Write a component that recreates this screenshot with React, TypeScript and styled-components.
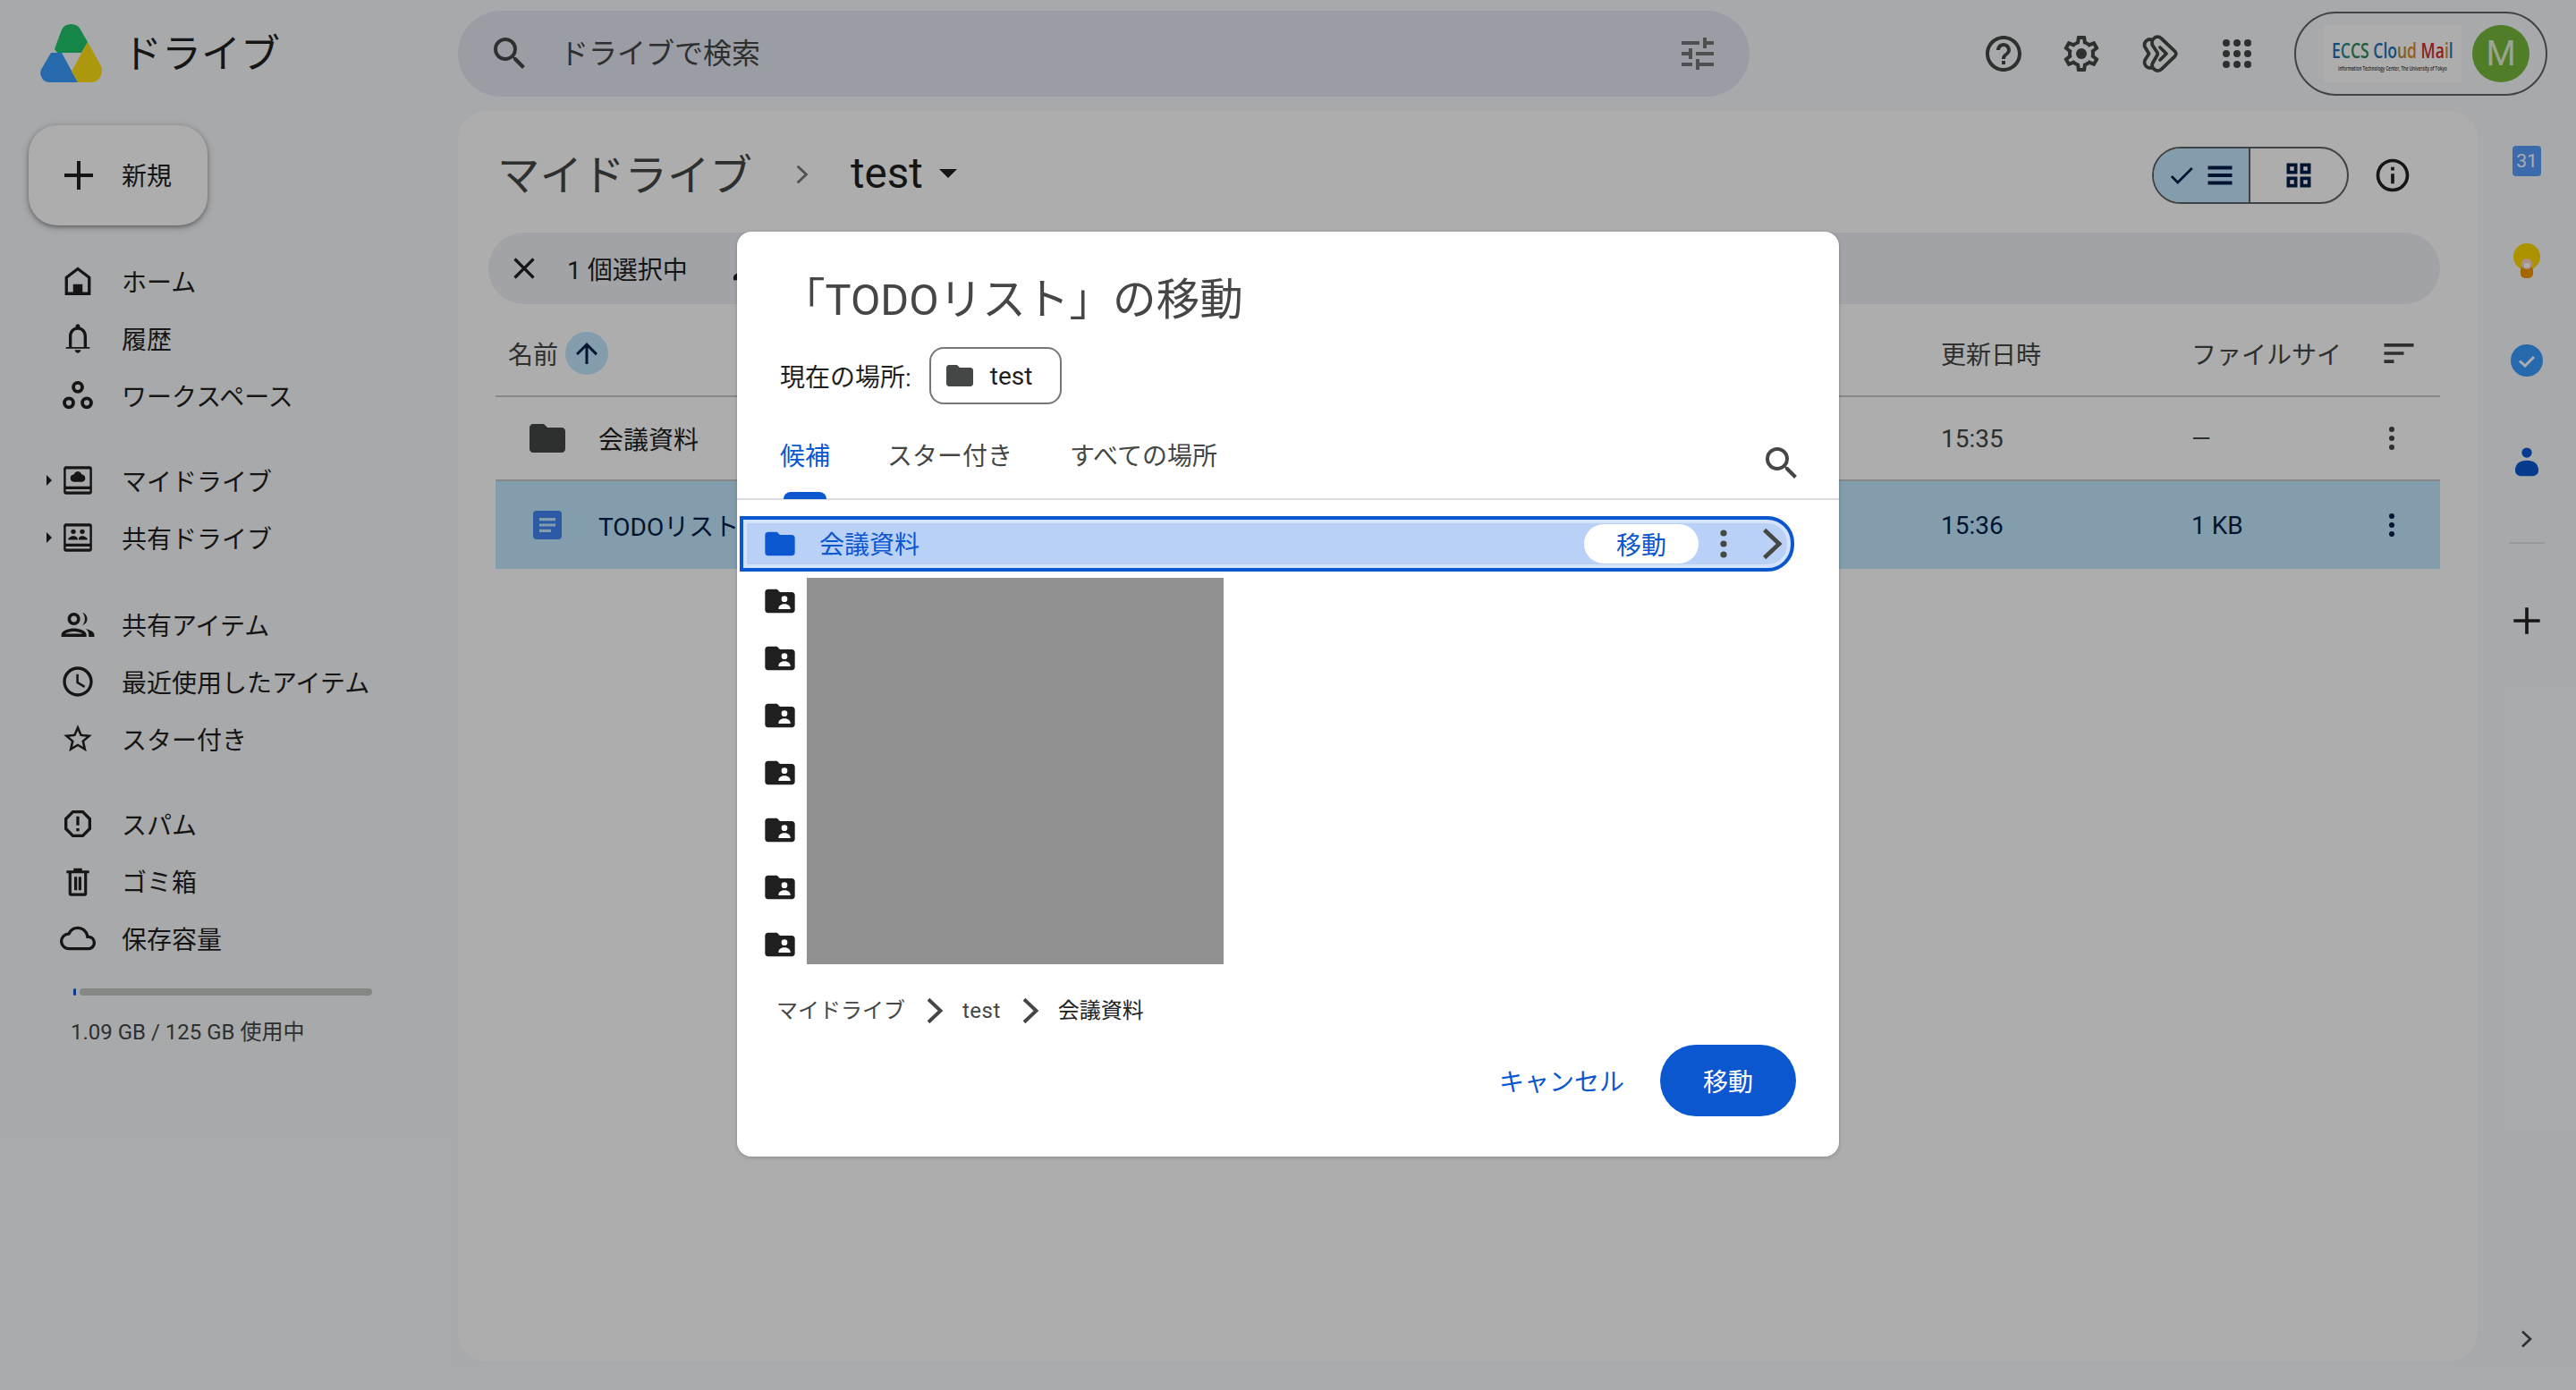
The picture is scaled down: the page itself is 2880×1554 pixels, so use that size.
import styled, { createGlobalStyle } from "styled-components";

const GlobalStyle = createGlobalStyle`
  html, body {
    margin: 0;
    padding: 0;
    height: 100%;
  }
  body {
    background: #f8fafd;
    font-family: Roboto, "Noto Sans CJK JP", sans-serif;
    color: #1f1f1f;
    overflow: hidden;
  }
  * {
    box-sizing: border-box;
  }
`;

const Shell = styled.div`
  position: relative;
  width: 2880px;
  height: 1554px;
  display: grid;
  grid-template-columns: 512px 2258px 110px;
  grid-template-rows: 124px 1398px;
`;

/* ---------- top bar ---------- */

const Brand = styled.div`
  display: flex;
  align-items: center;
  padding: 0 0 10px 45px;
  gap: 23px;
  font-size: 44px;
  color: #1f1f1f;
`;

const LogoWrap = styled.span`
  display: flex;
  margin-top: 5px;
`;

const TopBar = styled.div`
  grid-column: 2 / 4;
  display: flex;
  align-items: center;
  padding: 0 32px 4px 0;
`;

const SearchBox = styled.div`
  width: 1444px;
  height: 96px;
  border-radius: 48px;
  background: #e4e8f2;
  display: flex;
  align-items: center;
  padding: 0 34px;
  gap: 32px;
  font-size: 32px;
  color: #444746;
`;

const SearchLabel = styled.span`
  flex: 1;
  padding-bottom: 6px;
`;

const TuneWrap = styled.span`
  display: flex;
  color: #747775;
`;

const TopIcons = styled.div`
  display: flex;
  align-items: center;
  margin-left: 260px;
  gap: 39px;
  color: #444746;
`;

const AccountPill = styled.div`
  margin-left: auto;
  width: 283px;
  height: 94px;
  border: 2px solid #5f6368;
  border-radius: 47px;
  display: flex;
  align-items: center;
  justify-content: flex-end;
  padding-right: 18px;
  gap: 12px;
`;

const MailBox = styled.div`
  width: 154px;
  height: 64px;
  background: #fff;
  display: flex;
  align-items: center;
  justify-content: center;
`;

const MailLogo = styled.div`
  display: flex;
  flex-direction: column;
  align-items: center;
  font-family: "Open Sans", sans-serif;
  font-weight: 600;
  font-size: 24px;
  line-height: 33px;
  white-space: nowrap;
  transform: scaleX(0.73);
`;

const MailLetter = styled.span<{ $c: string }>`
  color: ${({ $c }) => $c};
`;

const MailSub = styled.div`
  font-size: 6.2px;
  line-height: 9px;
  font-weight: 600;
  color: #333;
`;

const Avatar = styled.div`
  width: 64px;
  height: 64px;
  border-radius: 50%;
  background: #75b83b;
  color: #e8f0d8;
  font-size: 38px;
  display: flex;
  align-items: center;
  justify-content: center;
`;

/* ---------- sidebar ---------- */

const Sidebar = styled.nav`
  display: flex;
  flex-direction: column;
  padding-top: 16px;
`;

const NewButton = styled.div`
  width: 200px;
  height: 112px;
  margin-left: 32px;
  border-radius: 32px;
  background: #fff;
  box-shadow: 0 2px 4px rgba(0, 0, 0, 0.3), 0 2px 8px 2px rgba(0, 0, 0, 0.15);
  display: flex;
  align-items: center;
  padding-left: 32px;
  gap: 24px;
  font-size: 28px;
  color: #1f1f1f;
`;

const NewLabel = styled.span`
  padding-bottom: 3px;
`;

const NavGroup = styled.div<{ $top: number }>`
  display: flex;
  flex-direction: column;
  margin-top: ${({ $top }) => $top}px;
`;

const NavRow = styled.div`
  height: 64px;
  display: flex;
  align-items: center;
  position: relative;
  padding-left: 62px;
  gap: 24px;
  font-size: 28px;
  color: #1f1f1f;
`;

const NavIcon = styled.span`
  width: 50px;
  height: 50px;
  display: flex;
  align-items: center;
  justify-content: center;
  color: #1f1f1f;
`;

const Caret = styled.span`
  position: absolute;
  left: 52px;
  top: 26px;
  width: 0;
  height: 0;
  border-left: 6px solid #1f1f1f;
  border-top: 6px solid transparent;
  border-bottom: 6px solid transparent;
`;

const StorageTrack = styled.div`
  width: 334px;
  height: 8px;
  margin: 24px 0 0 82px;
  display: flex;
  gap: 4px;
`;

const StorageUsed = styled.div`
  width: 3px;
  background: #0b57d0;
  border-radius: 2px;
`;

const StorageRest = styled.div`
  flex: 1;
  background: #c4c7c5;
  border-radius: 4px;
`;

const StorageText = styled.div`
  margin: 21px 0 0 79px;
  font-size: 24px;
  color: #444746;
`;

/* ---------- main panel ---------- */

const MainPanel = styled.main`
  background: #fff;
  border-radius: 32px;
  display: flex;
  flex-direction: column;
  padding: 0 42px;
`;

const TitleRow = styled.div`
  height: 136px;
  flex-shrink: 0;
  display: flex;
  align-items: center;
  padding: 8px 0 0 2px;
`;

const Crumbs = styled.div`
  display: flex;
  align-items: center;
  padding-bottom: 8px;
`;

const CrumbRoot = styled.span`
  font-size: 47.5px;
  color: #444746;
`;

const CrumbArrow = styled.span`
  margin: 6px 42px 0 42px;
  display: flex;
  color: #747775;
`;

const CrumbCurrent = styled.span`
  font-size: 47.5px;
  color: #1f1f1f;
  padding-top: 3px;
`;

const CrumbCaret = styled.span`
  width: 0;
  height: 0;
  margin: 4px 0 0 18px;
  border-top: 10px solid #1f1f1f;
  border-left: 10px solid transparent;
  border-right: 10px solid transparent;
`;

const TitleTools = styled.div`
  margin-left: auto;
  display: flex;
  align-items: center;
  gap: 27px;
  padding-right: 31px;
`;

const ViewToggle = styled.div`
  width: 220px;
  height: 64px;
  border: 2px solid #5f6368;
  border-radius: 32px;
  display: flex;
  overflow: hidden;
`;

const ToggleSide = styled.div<{ $on?: boolean }>`
  width: 50%;
  display: flex;
  align-items: center;
  justify-content: center;
  gap: 8px;
  background: ${({ $on }) => ($on ? "#c2e7ff" : "transparent")};
  border-right: ${({ $on }) => ($on ? "2px solid #5f6368" : "none")};
  color: #041e49;
`;

const SelectionBar = styled.div`
  height: 80px;
  flex-shrink: 0;
  margin-left: -8px;
  border-radius: 40px;
  background: #eef1f5;
  display: flex;
  align-items: center;
  padding-left: 20px;
  gap: 28px;
  font-size: 28px;
  color: #1f1f1f;
`;

const BarIcon = styled.span`
  display: flex;
  margin-left: 18px;
  color: #1f1f1f;
`;

const TableHead = styled.div`
  height: 104px;
  flex-shrink: 0;
  padding-top: 8px;
  display: flex;
  align-items: center;
  border-bottom: 2px solid #c7c7c7;
  font-size: 28px;
  color: #444746;
`;

const NameHead = styled.div`
  width: 1616px;
  flex-shrink: 0;
  padding-left: 14px;
  display: flex;
  align-items: center;
  gap: 8px;
`;

const SortBadge = styled.span`
  width: 48px;
  height: 48px;
  border-radius: 50%;
  background: #c2e7ff;
  display: flex;
  align-items: center;
  justify-content: center;
  color: #041e49;
`;

const DateCell = styled.div`
  width: 280px;
  flex-shrink: 0;
`;

const SizeCell = styled.div`
  width: 186px;
  flex-shrink: 0;
  white-space: nowrap;
  overflow: hidden;
`;

const EndCell = styled.div<{ $inset?: number }>`
  flex: 1;
  min-width: 0;
  display: flex;
  justify-content: center;
  padding-right: ${({ $inset }) => $inset ?? 0}px;
`;

const FileRow = styled.div<{ $on?: boolean }>`
  height: ${({ $on }) => ($on ? 98 : 94)}px;
  flex-shrink: 0;
  display: flex;
  align-items: center;
  font-size: 28px;
  background: ${({ $on }) => ($on ? "#c2e7ff" : "transparent")};
  color: ${({ $on }) => ($on ? "#041e49" : "#444746")};
  border-bottom: ${({ $on }) => ($on ? "none" : "2px solid #c7c7c7")};
`;

const FileName = styled.div<{ $on?: boolean }>`
  width: 1616px;
  flex-shrink: 0;
  padding-left: 34px;
  display: flex;
  align-items: center;
  gap: 33px;
  color: ${({ $on }) => ($on ? "#041e49" : "#1f1f1f")};
`;

/* ---------- right rail ---------- */

const Rail = styled.aside`
  display: flex;
  flex-direction: column;
  align-items: center;
  position: relative;
`;

const RailItem = styled.div`
  height: 112px;
  flex-shrink: 0;
  display: flex;
  align-items: center;
  justify-content: center;
`;

const RailRule = styled.div`
  width: 40px;
  height: 2px;
  background: #e3e3e3;
  margin: 34px 0 30px;
`;

const RailExpand = styled.div`
  position: absolute;
  right: 44px;
  bottom: 13px;
  display: flex;
  color: #444746;
`;

/* ---------- dialog ---------- */

const Scrim = styled.div`
  position: absolute;
  inset: 0;
  background: rgba(0, 0, 0, 0.32);
`;

const Dialog = styled.div`
  position: absolute;
  left: 824px;
  top: 259px;
  width: 1232px;
  height: 1034px;
  background: #fff;
  border-radius: 16px;
  box-shadow: 0 1px 4px rgba(0, 0, 0, 0.2);
  display: flex;
  flex-direction: column;
`;

const DialogTitle = styled.div`
  padding: 43px 0 0 50px;
  font-size: 48.6px;
  line-height: 68px;
  color: #444746;
`;

const LocationRow = styled.div`
  display: flex;
  align-items: center;
  padding: 18px 0 0 48px;
  gap: 20px;
  font-size: 28px;
  color: #1f1f1f;
`;

const LocationChip = styled.div`
  width: 148px;
  height: 64px;
  border: 2px solid #747775;
  border-radius: 16px;
  display: flex;
  align-items: center;
  padding-left: 14px;
  gap: 16px;
  color: #1f1f1f;
`;

const TabBar = styled.div`
  height: 107px;
  flex-shrink: 0;
  display: flex;
  padding: 0 40px 0 48px;
  border-bottom: 2px solid #dadce0;
  font-size: 28px;
  color: #444746;
`;

const Tab = styled.div<{ $on?: boolean }>`
  position: relative;
  margin-right: 64px;
  padding-top: 36px;
  color: ${({ $on }) => ($on ? "#0b57d0" : "#444746")};
`;

const TabMark = styled.span`
  position: absolute;
  left: 4px;
  right: 4px;
  bottom: -1px;
  height: 8px;
  border-radius: 8px 8px 0 0;
  background: #0b57d0;
`;

const TabSearch = styled.div`
  margin-left: auto;
  padding-top: 42px;
  display: flex;
  color: #444746;
`;

const SelectedFolder = styled.div`
  height: 62px;
  flex-shrink: 0;
  margin: 18px 50px 0 3px;
  border: 4px solid #0b57d0;
  border-radius: 0 30px 30px 0;
  background: #b9d1f7;
  box-shadow: inset 0 0 0 4px #d6e4fb;
  display: flex;
  align-items: center;
  padding-left: 21px;
  font-size: 28px;
  color: #0b57d0;
`;

const SelectedName = styled.span`
  margin-left: 24px;
  flex: 1;
  padding-bottom: 2px;
`;

const MoveChip = styled.span`
  width: 128px;
  height: 44px;
  border-radius: 22px;
  background: #fff;
  display: flex;
  align-items: center;
  justify-content: center;
  color: #0b57d0;
`;

const SelectedAction = styled.span<{ $gap: number }>`
  display: flex;
  margin-left: ${({ $gap }) => $gap}px;
  color: #444746;
`;

const FolderList = styled.div`
  display: flex;
  height: 432px;
  flex-shrink: 0;
  margin-top: 7px;
  padding-left: 28px;
`;

const FolderColumn = styled.div`
  width: 40px;
  padding-top: 6px;
  display: flex;
  flex-direction: column;
  gap: 24px;
  flex-shrink: 0;
`;

const FolderSlot = styled.span`
  display: flex;
  height: 40px;
  flex-shrink: 0;
`;

const Redacted = styled.div`
  width: 466px;
  margin-left: 10px;
  background: #919191;
`;

const PathRow = styled.div`
  display: flex;
  align-items: center;
  padding: 34px 0 0 44px;
  gap: 14px;
  font-size: 24px;
  line-height: 36px;
  color: #444746;
`;

const PathWord = styled.span`
  letter-spacing: 0.5px;
`;

const PathLast = styled.span`
  color: #1f1f1f;
`;

const PathArrow = styled.span`
  display: flex;
  color: #444746;
`;

const DialogActions = styled.div`
  display: flex;
  align-items: center;
  justify-content: flex-end;
  padding: 20px 48px 0 0;
  gap: 40px;
  font-size: 28px;
`;

const CancelLabel = styled.span`
  color: #0b57d0;
`;

const MoveButton = styled.div`
  width: 152px;
  height: 80px;
  border-radius: 40px;
  background: #0b57d0;
  color: #fff;
  display: flex;
  align-items: center;
  justify-content: center;
`;

/* ---------- icons ---------- */

const I = ({ s = 48, children }: { s?: number; children: React.ReactNode }) => (
  <svg width={s} height={s} viewBox="0 0 24 24" fill="currentColor">
    {children}
  </svg>
);

const SearchIcon = ({ s = 48 }: { s?: number }) => (
  <I s={s}>
    <path d="M15.5 14h-.79l-.28-.27A6.47 6.47 0 0 0 16 9.5 6.5 6.5 0 1 0 9.5 16c1.61 0 3.09-.59 4.23-1.57l.27.28v.79l5 4.99L20.49 19l-4.99-5zm-6 0C7.01 14 5 11.99 5 9.5S7.01 5 9.5 5 14 7.01 14 9.5 11.99 14 9.5 14z" />
  </I>
);

const FolderIcon = ({ s = 40, c = "currentColor" }: { s?: number; c?: string }) => (
  <svg width={s} height={s} viewBox="0 0 24 24" fill={c}>
    <path d="M10 4H4c-1.1 0-2 .9-2 2v12c0 1.1.9 2 2 2h16c1.1 0 2-.9 2-2V8c0-1.1-.9-2-2-2h-8l-2-2z" />
  </svg>
);

const SharedFolderIcon = () => (
  <svg width="40" height="40" viewBox="0 0 24 24" fill="#1f1f1f">
    <path d="M10 4H4c-1.1 0-2 .9-2 2v12c0 1.1.9 2 2 2h16c1.1 0 2-.9 2-2V8c0-1.1-.9-2-2-2h-8l-2-2z" />
    <circle cx="15" cy="10.6" r="2" fill="#fff" />
    <path d="M11 17c0-1.9 2.2-3 4-3s4 1.1 4 3v.4h-8z" fill="#fff" />
  </svg>
);

const Dots = ({ s = 40 }: { s?: number }) => (
  <I s={s}>
    <circle cx="12" cy="6" r="1.8" />
    <circle cx="12" cy="12" r="1.8" />
    <circle cx="12" cy="18" r="1.8" />
  </I>
);

const Chevron = ({ s = 32 }: { s?: number }) => (
  <svg width={s} height={s} viewBox="0 0 24 24" fill="none" stroke="currentColor" strokeWidth="2.6">
    <path d="M8 3.5 17 12l-9 8.5" />
  </svg>
);

const DriveLogo = () => (
  <svg width="69" height="65" viewBox="0 0 69 65">
    <path d="M24 6Q27 0 34.5 0T45 6l8 14-7 12H19l-3-4z" fill="#1fc46a" />
    <path d="M12 32h12l18 33H10q-7 0-9-7-2-5 1-9z" fill="#3a9bff" />
    <path d="M53 20l14 25q4 7 0 14-3 6-10 6H42l-7-12z" fill="#ffe014" />
  </svg>
);

const HelpIcon = () => (
  <I s={48}>
    <path d="M11 18h2v-2h-2v2zm1-16C6.48 2 2 6.48 2 12s4.48 10 10 10 10-4.48 10-10S17.52 2 12 2zm0 18c-4.41 0-8-3.59-8-8s3.59-8 8-8 8 3.59 8 8-3.59 8-8 8zm0-14c-2.21 0-4 1.79-4 4h2c0-1.1.9-2 2-2s2 .9 2 2c0 2-3 1.75-3 5h2c0-2.25 3-2.5 3-5 0-2.21-1.79-4-4-4z" />
  </I>
);

const GearIcon = () => (
  <I s={48}>
    <path d="M19.43 12.98c.04-.32.07-.64.07-.98 0-.34-.03-.66-.07-.98l2.11-1.65c.19-.15.24-.42.12-.64l-2-3.46a.5.5 0 0 0-.61-.22l-2.49 1c-.52-.4-1.08-.73-1.69-.98l-.38-2.65A.488.488 0 0 0 14 2h-4c-.25 0-.46.18-.49.42l-.38 2.65c-.61.25-1.17.59-1.69.98l-2.49-1a.566.566 0 0 0-.18-.03c-.17 0-.34.09-.43.25l-2 3.46c-.13.22-.07.49.12.64l2.11 1.65c-.04.32-.07.65-.07.98 0 .33.03.66.07.98l-2.11 1.65c-.19.15-.24.42-.12.64l2 3.46a.5.5 0 0 0 .61.22l2.49-1c.52.4 1.08.73 1.69.98l.38 2.65c.03.24.24.42.49.42h4c.25 0 .46-.18.49-.42l.38-2.65c.61-.25 1.17-.59 1.69-.98l2.49 1c.06.02.12.03.18.03.17 0 .34-.09.43-.25l2-3.46c.12-.22.07-.49-.12-.64l-2.11-1.65zm-1.98-1.71c.04.31.05.52.05.73 0 .21-.02.43-.05.73l-.14 1.13.89.7 1.08.84-.7 1.21-1.27-.51-1.04-.42-.9.68c-.43.32-.84.56-1.25.73l-1.06.43-.16 1.13-.2 1.35h-1.4l-.19-1.35-.16-1.13-1.06-.43c-.43-.18-.83-.41-1.23-.71l-.91-.7-1.06.43-1.27.51-.7-1.21 1.08-.84.89-.7-.14-1.13c-.03-.31-.05-.54-.05-.74s.02-.43.05-.73l.14-1.13-.89-.7-1.08-.84.7-1.21 1.27.51 1.04.42.9-.68c.43-.32.84-.56 1.25-.73l1.06-.43.16-1.13.2-1.35h1.39l.19 1.35.16 1.13 1.06.43c.43.18.83.41 1.23.71l.91.7 1.06-.43 1.27-.51.7 1.21-1.07.85-.89.7.14 1.13z" />
    <circle cx="12" cy="12" r="3" />
  </I>
);

const GeminiIcon = () => (
  <svg width="48" height="48" viewBox="0 0 24 24" fill="none" stroke="currentColor" strokeWidth="1.9" strokeLinejoin="round" strokeLinecap="round">
    <path d="M9 3.5c1.2-1.2 3-1.2 4.2 0l7.6 7.2c.8.8.8 2 0 2.7l-7.4 7.2c-1.3 1.2-3.2 1.2-4.4 0-1-1-1.2-2.4-.5-3.6L10.8 13c.4-.6.4-1.3 0-1.9L8.4 7.5C7.7 6.3 7.9 4.6 9 3.5z" />
    <path d="M8 4.3c-1-.5-2.3-.3-3.2.5-1.1 1.1-1.3 2.7-.5 4l2 3.2-2 3.1c-.8 1.3-.6 3 .5 4.1.9.8 2.2 1 3.2.5" />
    <path d="M12.5 8.5 16 12l-3.5 3.5" />
  </svg>
);

const AppsIcon = () => (
  <I s={48}>
    <circle cx="6" cy="6" r="2" /><circle cx="12" cy="6" r="2" /><circle cx="18" cy="6" r="2" />
    <circle cx="6" cy="12" r="2" /><circle cx="12" cy="12" r="2" /><circle cx="18" cy="12" r="2" />
    <circle cx="6" cy="18" r="2" /><circle cx="12" cy="18" r="2" /><circle cx="18" cy="18" r="2" />
  </I>
);

const TuneIcon = () => (
  <I s={48}>
    <path d="M3 17v2h6v-2H3zM3 5v2h10V5H3zm10 16v-2h8v-2h-8v-2h-2v6h2zM7 9v2H3v2h4v2h2V9H7zm14 4v-2H11v2h10zm-6-4h2V7h4V5h-4V3h-2v6z" />
  </I>
);

const InfoIcon = () => (
  <I s={44}>
    <path d="M11 7h2v2h-2V7zm0 4h2v6h-2v-6zm1-9C6.48 2 2 6.48 2 12s4.48 10 10 10 10-4.48 10-10S17.52 2 12 2zm0 18c-4.41 0-8-3.59-8-8s3.59-8 8-8 8 3.59 8 8-3.59 8-8 8z" />
  </I>
);

const CloseIcon = () => (
  <I s={40}>
    <path d="M19 6.41 17.59 5 12 10.59 6.41 5 5 6.41 10.59 12 5 17.59 6.41 19 12 13.41 17.59 19 19 17.59 13.41 12z" />
  </I>
);

const PersonIcon = () => (
  <I s={40}>
    <path d="M12 12c2.2 0 4-1.8 4-4s-1.8-4-4-4-4 1.8-4 4 1.8 4 4 4zm0 2c-2.7 0-9 1.3-9 4v2h18v-2c0-2.7-6.300-4-9-4z" />
  </I>
);

const PlusIcon = ({ s = 48 }: { s?: number }) => (
  <I s={s}>
    <path d="M20 13h-7v7h-2v-7H4v-2h7V4h2v7h7z" />
  </I>
);

const HomeNav = () => (
  <svg width="36" height="36" viewBox="0 0 24 24" fill="currentColor">
    <path d="M3.5 21.5v-12L12 3l8.5 6.5v12z" fill="none" stroke="currentColor" strokeWidth="2.2" />
    <rect x="8.5" y="14.5" width="7" height="7" />
  </svg>
);
const BellNav = () => (
  <I s={40}>
    <path d="M12 22c1.1 0 2-.9 2-2h-4c0 1.1.9 2 2 2zm6-6v-5c0-3.100-1.600-5.600-4.500-6.300V4c0-.8-.7-1.500-1.500-1.500s-1.500.7-1.500 1.500v.7C7.600 5.400 6 7.900 6 11v7H4v1h16v-1h-2v-2zm-2 2H8v-7c0-2.500 1.500-4.500 4-4.500s4 2 4 4.500v7z" />
  </I>
);
const WorkspaceNav = () => (
  <svg width="40" height="40" viewBox="0 0 24 24" fill="none" stroke="currentColor" strokeWidth="2.3">
    <circle cx="12" cy="6.5" r="3" />
    <circle cx="6" cy="17" r="3" />
    <circle cx="18" cy="17" r="3" />
  </svg>
);
const MyDriveNav = () => (
  <I s={40}>
    <path d="M4 2.5h16c.8 0 1.500.7 1.500 1.500v16c0 .8-.7 1.500-1.500 1.500H4c-.8 0-1.500-.7-1.500-1.500V4c0-.8.7-1.500 1.500-1.500zm0 2v11.500h16V4.500H4zm0 13.500v1.500h16V18H4z" />
    <path d="M12 6c1.200 0 2.200.8 2.500 2 1.300.1 2.500 1.100 2.500 2.600 0 1.500-1.200 2.400-2.500 2.400h-5c-1.300 0-2.500-.9-2.500-2.400C7 9.100 8.200 8.100 9.500 8c.3-1.200 1.300-2 2.500-2z" />
  </I>
);
const SharedDriveNav = () => (
  <I s={40}>
    <path d="M4 2.5h16c.8 0 1.500.7 1.500 1.500v16c0 .8-.7 1.500-1.500 1.500H4c-.8 0-1.500-.7-1.500-1.500V4c0-.8.7-1.500 1.500-1.500zm0 2v11.500h16V4.500H4zm0 13.500v1.500h16V18H4z" />
    <circle cx="9" cy="8" r="1.6" />
    <circle cx="15" cy="8" r="1.6" />
    <path d="M5.500 13.500c0-1.500 2-2.500 3.500-2.500s3 .7 3 2.500H5.500zm7 0c0-1.800 1-2.500 2.500-2.500s3.500 1 3.500 2.500h-6z" />
  </I>
);
const PeopleNav = () => (
  <I s={42}>
    <path d="M9.500 12.500c2.200 0 4-1.800 4-4s-1.800-4-4-4-4 1.800-4 4 1.800 4 4 4zm0-6c1.100 0 2 .9 2 2s-.9 2-2 2-2-.9-2-2 .9-2 2-2zm0 8c-2.900 0-8 1.400-8 4V20h16v-1.500c0-2.600-5.100-4-8-4zM4 18c.7-.8 3.300-1.500 5.500-1.500S14.300 17.200 15 18H4z" />
    <path d="M15 4.600c1.700.4 3 2 3 3.900s-1.300 3.500-3 3.900c1-1 1.500-2.400 1.500-3.900S16 5.600 15 4.600zM17 14.800c2.600.6 5.500 1.800 5.500 3.700V20H19v-1.500c0-1.600-.8-2.800-2-3.700z" />
  </I>
);
const ClockNav = () => (
  <I s={40}>
    <path d="M12 2C6.500 2 2 6.500 2 12s4.500 10 10 10 10-4.500 10-10S17.500 2 12 2zm0 18c-4.400 0-8-3.600-8-8s3.600-8 8-8 8 3.600 8 8-3.600 8-8 8zm.5-13H11v6l5.200 3.200.8-1.300-4.500-2.700V7z" />
  </I>
);
const StarNav = () => (
  <I s={38}>
    <path d="M22 9.240l-7.190-.62L12 2 9.190 8.630 2 9.240l5.460 4.730L5.820 21 12 17.270 18.180 21l-1.630-7.030L22 9.240zM12 15.400l-3.760 2.270 1-4.280-3.320-2.880 4.380-.38L12 6.100l1.710 4.040 4.380.38-3.320 2.880 1 4.280L12 15.400z" />
  </I>
);
const SpamNav = () => (
  <I s={40}>
    <path d="M15.730 3H8.270L3 8.270v7.460L8.270 21h7.460L21 15.730V8.270L15.730 3zM19 14.900 14.900 19H9.100L5 14.900V9.100L9.100 5h5.800L19 9.100v5.800z" />
    <path d="M11 7h2v6h-2zM11 15h2v2h-2z" />
  </I>
);
const TrashNav = () => (
  <I s={38}>
    <path d="M15 3H9v1.500H4v2h1.500V21c0 .8.7 1.500 1.500 1.500h10c.8 0 1.500-.7 1.500-1.500V6.500H20v-2h-5V3zm1.500 17.500h-9v-14h9v14z" />
    <path d="M9.500 9h2v9.500h-2zM12.500 9h2v9.500h-2z" />
  </I>
);
const CloudNav = () => (
  <I s={40}>
    <path d="M19.350 10.040A7.490 7.490 0 0 0 12 4C9.110 4 6.600 5.640 5.350 8.040A5.994 5.994 0 0 0 0 14c0 3.310 2.690 6 6 6h13c2.760 0 5-2.240 5-5 0-2.640-2.050-4.780-4.650-4.960zM19 18H6c-2.210 0-4-1.790-4-4 0-2.050 1.530-3.760 3.560-3.970l1.070-.11.500-.95A5.469 5.469 0 0 1 12 6c2.620 0 4.880 1.860 5.390 4.430l.3 1.500 1.530.11A2.980 2.980 0 0 1 22 15c0 1.650-1.350 3-3 3z" />
  </I>
);

const DocIcon = () => (
  <svg width="48" height="48" viewBox="0 0 24 24">
    <rect x="4" y="4" width="16" height="16" rx="2" fill="#4285f4" />
    <path d="M7.500 8h9v1.600h-9zM7.500 11.200h9v1.600h-9zM7.500 14.400h6.500v1.600H7.500z" fill="#c2e7ff" />
  </svg>
);

const CalendarIcon = () => (
  <svg width="34" height="36" viewBox="0 0 34 36">
    <rect x="1" y="1" width="32" height="34" rx="4" fill="#5a9bff" />
    <text x="17" y="25" textAnchor="middle" fontSize="21" fontFamily="Roboto, sans-serif" fill="#fff">31</text>
  </svg>
);

const KeepIcon = () => (
  <svg width="32" height="42" viewBox="0 0 32 42">
    <circle cx="16" cy="16" r="15" fill="#ffd800" />
    <rect x="9" y="26" width="14" height="14" rx="5" fill="#f29900" />
    <circle cx="16" cy="24" r="6" fill="#fdd0d0" />
    <rect x="13" y="23" width="6" height="5" fill="#fff" />
  </svg>
);

const TasksIcon = () => (
  <svg width="38" height="40" viewBox="0 0 38 40">
    <circle cx="19" cy="19" r="18" fill="#3a9bff" />
    <path d="M11 19.500l6 5.500 10-10" fill="none" stroke="#fff" strokeWidth="3" />
  </svg>
);

const ContactsIcon = () => (
  <svg width="28" height="33" viewBox="0 0 32 38">
    <circle cx="16" cy="7" r="6.500" fill="#0b57d0" />
    <path d="M1 30c0-9 6-13 15-13s15 4 15 13c0 4-3 7-7 7H8c-4 0-7-3-7-7z" fill="#0b57d0" />
  </svg>
);

const navTop = [
  { label: "ホーム", icon: <HomeNav /> },
  { label: "履歴", icon: <BellNav /> },
  { label: "ワークスペース", icon: <WorkspaceNav /> },
];
const navDrives = [
  { label: "マイドライブ", icon: <MyDriveNav /> },
  { label: "共有ドライブ", icon: <SharedDriveNav /> },
];
const navShared = [
  { label: "共有アイテム", icon: <PeopleNav /> },
  { label: "最近使用したアイテム", icon: <ClockNav /> },
  { label: "スター付き", icon: <StarNav /> },
];
const navBottom = [
  { label: "スパム", icon: <SpamNav /> },
  { label: "ゴミ箱", icon: <TrashNav /> },
  { label: "保存容量", icon: <CloudNav /> },
];

const mailWords: [string, string][] = [
  ["E", "#1a73b8"], ["C", "#2b8a8a"], ["C", "#2e8b57"], ["S", "#2e8b57"], [" ", "#000"],
  ["C", "#1a73b8"], ["l", "#1a73b8"], ["o", "#1a73b8"], ["u", "#b8893a"], ["d", "#e08a2a"], [" ", "#000"],
  ["M", "#d32f2f"], ["a", "#d32f2f"], ["i", "#e08a2a"], ["l", "#1a73b8"],
];

const folderSlots = [0, 1, 2, 3, 4, 5, 6];

export default function App() {
  return (
    <Shell>
      <GlobalStyle />
      <Brand>
        <LogoWrap>
          <DriveLogo />
        </LogoWrap>
        ドライブ
      </Brand>
      <TopBar>
        <SearchBox>
          <SearchIcon />
          <SearchLabel>ドライブで検索</SearchLabel>
          <TuneWrap>
            <TuneIcon />
          </TuneWrap>
        </SearchBox>
        <TopIcons>
          <HelpIcon />
          <GearIcon />
          <GeminiIcon />
          <AppsIcon />
        </TopIcons>
        <AccountPill>
          <MailBox>
            <MailLogo>
              <div>
                {mailWords.map(([ch, c], i) => (
                  <MailLetter key={i} $c={c}>{ch}</MailLetter>
                ))}
              </div>
              <MailSub>Information Technology Center, The University of Tokyo</MailSub>
            </MailLogo>
          </MailBox>
          <Avatar>M</Avatar>
        </AccountPill>
      </TopBar>

      <Sidebar>
        <NewButton>
          <PlusIcon />
          <NewLabel>新規</NewLabel>
        </NewButton>
        <NavGroup $top={30}>
          {navTop.map((n) => (
            <NavRow key={n.label}>
              <NavIcon>{n.icon}</NavIcon>
              {n.label}
            </NavRow>
          ))}
        </NavGroup>
        <NavGroup $top={31}>
          {navDrives.map((n) => (
            <NavRow key={n.label}>
              <Caret />
              <NavIcon>{n.icon}</NavIcon>
              {n.label}
            </NavRow>
          ))}
        </NavGroup>
        <NavGroup $top={33}>
          {navShared.map((n) => (
            <NavRow key={n.label}>
              <NavIcon>{n.icon}</NavIcon>
              {n.label}
            </NavRow>
          ))}
        </NavGroup>
        <NavGroup $top={31}>
          {navBottom.map((n) => (
            <NavRow key={n.label}>
              <NavIcon>{n.icon}</NavIcon>
              {n.label}
            </NavRow>
          ))}
        </NavGroup>
        <StorageTrack>
          <StorageUsed />
          <StorageRest />
        </StorageTrack>
        <StorageText>1.09 GB / 125 GB 使用中</StorageText>
      </Sidebar>

      <MainPanel>
        <TitleRow>
          <Crumbs>
            <CrumbRoot>マイドライブ</CrumbRoot>
            <CrumbArrow>
              <Chevron s={26} />
            </CrumbArrow>
            <CrumbCurrent>test</CrumbCurrent>
            <CrumbCaret />
          </Crumbs>
          <TitleTools>
            <ViewToggle>
              <ToggleSide $on>
                <I s={34}>
                  <path d="M9 16.200 4.800 12l-1.400 1.400L9 19 21 7l-1.400-1.400z" />
                </I>
                <I s={36}>
                  <path d="M3 5h18v2.600H3zM3 10.700h18v2.600H3zM3 16.400h18V19H3z" />
                </I>
              </ToggleSide>
              <ToggleSide>
                <I s={36}>
                  <path d="M3 3h8v8H3zm2.500 2.500v3h3v-3zM13 3h8v8h-8zm2.500 2.500v3h3v-3zM3 13h8v8H3zm2.500 2.500v3h3v-3zM13 13h8v8h-8zm2.500 2.500v3h3v-3z" />
                </I>
              </ToggleSide>
            </ViewToggle>
            <InfoIcon />
          </TitleTools>
        </TitleRow>
        <SelectionBar>
          <CloseIcon />
          1 個選択中
          <BarIcon>
            <PersonIcon />
          </BarIcon>
        </SelectionBar>
        <TableHead>
          <NameHead>
            名前
            <SortBadge>
              <I s={36}>
                <path d="M4 12l1.410 1.410L11 7.830V20h2V7.830l5.580 5.590L20 12l-8-8-8 8z" />
              </I>
            </SortBadge>
          </NameHead>
          <DateCell>更新日時</DateCell>
          <SizeCell>ファイルサイ</SizeCell>
          <EndCell>
            <I s={44}>
              <path d="M3 6h18v2H3zM3 11h12v2H3zM3 16h6v2H3z" />
            </I>
          </EndCell>
        </TableHead>
        <FileRow>
          <FileName>
            <FolderIcon s={48} c="#444746" />
            会議資料
          </FileName>
          <DateCell>15:35</DateCell>
          <SizeCell>—</SizeCell>
          <EndCell $inset={16}>
            <Dots />
          </EndCell>
        </FileRow>
        <FileRow $on>
          <FileName $on>
            <DocIcon />
            TODOリスト
          </FileName>
          <DateCell>15:36</DateCell>
          <SizeCell>1 KB</SizeCell>
          <EndCell $inset={16}>
            <Dots />
          </EndCell>
        </FileRow>
      </MainPanel>

      <Rail>
        <RailItem><CalendarIcon /></RailItem>
        <RailItem><KeepIcon /></RailItem>
        <RailItem><TasksIcon /></RailItem>
        <RailItem><ContactsIcon /></RailItem>
        <RailRule />
        <RailItem><PlusIcon s={44} /></RailItem>
        <RailExpand>
          <Chevron s={24} />
        </RailExpand>
      </Rail>

      <Scrim />

      <Dialog>
        <DialogTitle>「TODOリスト」の移動</DialogTitle>
        <LocationRow>
          現在の場所:
          <LocationChip>
            <FolderIcon s={36} c="#444746" />
            test
          </LocationChip>
        </LocationRow>
        <TabBar>
          <Tab $on>
            候補
            <TabMark />
          </Tab>
          <Tab>スター付き</Tab>
          <Tab>すべての場所</Tab>
          <TabSearch>
            <SearchIcon s={48} />
          </TabSearch>
        </TabBar>
        <SelectedFolder>
          <FolderIcon s={40} c="#0b57d0" />
          <SelectedName>会議資料</SelectedName>
          <MoveChip>移動</MoveChip>
          <SelectedAction $gap={4}>
            <Dots s={48} />
          </SelectedAction>
          <SelectedAction $gap={7}>
            <Chevron s={44} />
          </SelectedAction>
        </SelectedFolder>
        <FolderList>
          <FolderColumn>
            {folderSlots.map((n) => (
              <FolderSlot key={n}>
                <SharedFolderIcon />
              </FolderSlot>
            ))}
          </FolderColumn>
          <Redacted />
        </FolderList>
        <PathRow>
          マイドライブ
          <PathArrow><Chevron s={36} /></PathArrow>
          <PathWord>test</PathWord>
          <PathArrow><Chevron s={36} /></PathArrow>
          <PathLast>会議資料</PathLast>
        </PathRow>
        <DialogActions>
          <CancelLabel>キャンセル</CancelLabel>
          <MoveButton>移動</MoveButton>
        </DialogActions>
      </Dialog>
    </Shell>
  );
}
